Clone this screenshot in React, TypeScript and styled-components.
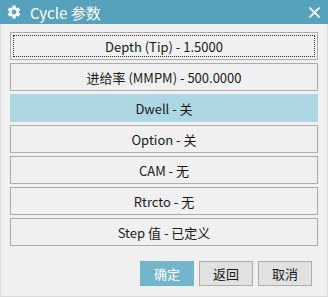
import styled, { createGlobalStyle } from "styled-components";
import { MdSettings } from "react-icons/md";

type Param = {
  id: number;
  label: string;
  active?: boolean;
  focused?: boolean;
};

const PARAMS: Array<Param> = [
  { id: 1, label: "Depth (Tip) - 1.5000", focused: true },
  { id: 2, label: "进给率 (MMPM) - 500.0000" },
  { id: 3, label: "Dwell - 关", active: true },
  { id: 4, label: "Option - 关" },
  { id: 5, label: "CAM - 无" },
  { id: 6, label: "Rtrcto - 无" },
  { id: 7, label: "Step 值 - 已定义" },
];

const GlobalStyle = createGlobalStyle`
  html, body {
    margin: 0;
    padding: 0;
    background: #f0f0f0;
  }
  body {
    font-family: "Noto Sans CJK SC", "Noto Sans", sans-serif;
  }
`;

function App() {
  return (
    <>
      <GlobalStyle />
      <SWindow>
        <STitleBar>
          <STitle>
            <MdSettings size={16} />
            <span>Cycle 参数</span>
          </STitle>
          <SClose>
            <svg width="11" height="11" viewBox="0 0 11 11">
              <path d="M0.5 0.5 L10.5 10.5 M10.5 0.5 L0.5 10.5" stroke="#fff" strokeWidth="1.6" />
            </svg>
          </SClose>
        </STitleBar>
        <SBody>
          <SList>
            {PARAMS.map((p) => (
              <SParamButton key={p.id} $active={p.active} $focused={p.focused}>
                {p.label}
              </SParamButton>
            ))}
          </SList>
          <SFooter>
            <SOkButton>确定</SOkButton>
            <SFooterButton>返回</SFooterButton>
            <SFooterButton>取消</SFooterButton>
          </SFooter>
        </SBody>
      </SWindow>
    </>
  );
}

const SWindow = styled.div`
  width: 328px;
  height: 297px;
  display: flex;
  flex-direction: column;
  box-sizing: border-box;
`;

const STitleBar = styled.div`
  height: 24px;
  background: #56a2bc;
  color: #fff;
  display: flex;
  align-items: center;
  justify-content: space-between;
  padding: 0 8px 0 6px;
  flex-shrink: 0;
`;

const STitle = styled.div`
  display: flex;
  align-items: center;
  gap: 8px;
  font-size: 15px;
  line-height: 1;
  svg {
    display: block;
  }
`;

const SClose = styled.div`
  display: flex;
  align-items: center;
  svg {
    display: block;
  }
`;

const SBody = styled.div`
  flex: 1;
  display: flex;
  flex-direction: column;
  border: 1px solid #dadada;
  border-top: none;
  padding: 8px 9px 0;
`;

const SList = styled.div`
  display: flex;
  flex-direction: column;
  gap: 3px;
`;

const SParamButton = styled.div<{ $active?: boolean; $focused?: boolean }>`
  height: 28px;
  box-sizing: border-box;
  border: 1px solid ${(p) => (p.$active ? "#add8e3" : "#adadad")};
  background: ${(p) => (p.$active ? "#add8e3" : "#f0f0f0")};
  color: #1a1a1a;
  font-size: 13px;
  display: flex;
  align-items: center;
  justify-content: center;
  outline: ${(p) => (p.$focused ? "1px dotted #333" : "none")};
  outline-offset: -4px;
`;

const SFooter = styled.div`
  display: flex;
  justify-content: flex-end;
  gap: 5px;
  margin-top: 15px;
  padding-right: 6px;
`;

const SFooterButton = styled.div`
  width: 54px;
  height: 25px;
  box-sizing: border-box;
  border: 1px solid #adadad;
  background: #e1e1e1;
  color: #1a1a1a;
  font-size: 13px;
  display: flex;
  align-items: center;
  justify-content: center;
`;

const SOkButton = styled(SFooterButton)`
  border-color: #73b5cb;
  background: #73b5cb;
  color: #fff;
`;

export default App;
